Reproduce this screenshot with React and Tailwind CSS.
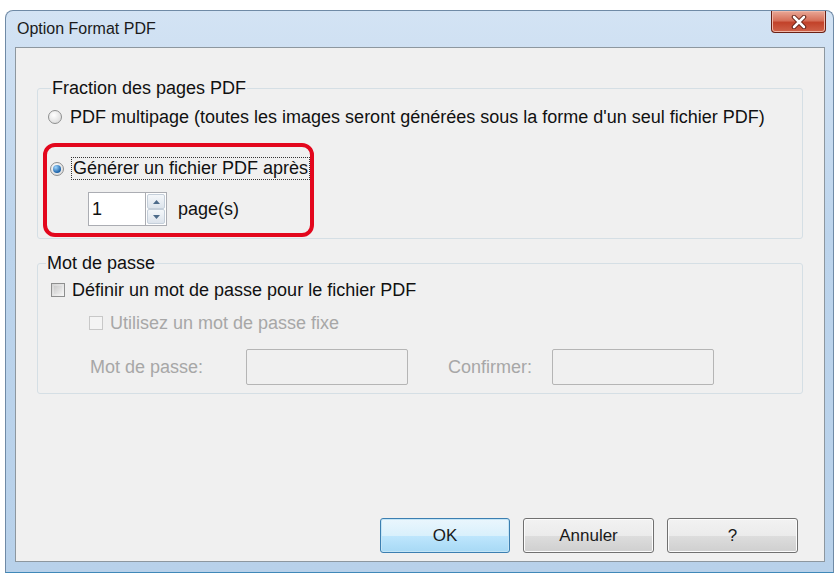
import React from 'react'

function Radio({ checked }) {
  return (
    <span className="relative flex h-[14px] w-[14px] shrink-0 items-center justify-center rounded-full border border-[#8e8f8f] bg-[radial-gradient(circle_at_40%_35%,#ffffff,#d4d4d4)]">
      {checked && (
        <span className="h-[8px] w-[8px] rounded-full bg-[radial-gradient(circle_at_35%_30%,#9fd7ff,#1c62a8_70%)]" />
      )}
    </span>
  )
}

function Checkbox({ disabled }) {
  return (
    <span
      className={
        disabled
          ? 'h-[14px] w-[14px] shrink-0 border border-[#c8c8c8] bg-[#f4f4f4]'
          : 'h-[14px] w-[14px] shrink-0 border border-[#8e8f8f] bg-[linear-gradient(135deg,#d4d4d4,#f6f6f6)] p-[2px]'
      }
    >
      {!disabled && <span className="block h-full w-full bg-[linear-gradient(135deg,#cbcbcb,#efefef)]" />}
    </span>
  )
}

function Spinner() {
  return (
    <div className="flex h-[34px]">
      <div className="flex w-[57px] items-center border border-[#abadb3] border-r-0 bg-white pl-[3px] text-[18px] leading-none">1</div>
      <div className="flex w-[22px] flex-col border border-[#abadb3] bg-white p-[1px]">
        <div className="flex flex-1 items-center justify-center rounded-[2px] border border-[#c5cfda] bg-[linear-gradient(to_bottom,#f4f7fa,#dde4ec)]">
          <svg width="7" height="4" viewBox="0 0 7 4"><path d="M0 4 L3.5 0 L7 4 Z" fill="#4d6b8a" /></svg>
        </div>
        <div className="flex flex-1 items-center justify-center rounded-[2px] border border-[#c5cfda] bg-[linear-gradient(to_bottom,#f4f7fa,#dde4ec)]">
          <svg width="7" height="4" viewBox="0 0 7 4"><path d="M0 0 L3.5 4 L7 0 Z" fill="#4d6b8a" /></svg>
        </div>
      </div>
    </div>
  )
}

function Button({ children, primary }) {
  return (
    <div
      className={
        primary
          ? 'flex h-[35px] w-[130px] items-center justify-center rounded-[3px] border border-[#3c7fb1] bg-[linear-gradient(to_bottom,#eaf6fd_0%,#d9f0fc_50%,#bee6fd_51%,#a7d9f5_100%)] shadow-[inset_0_0_0_1px_#c4e5f6] text-[17px] text-[#1a1a1a]'
          : 'flex h-[35px] w-[131px] items-center justify-center rounded-[3px] border border-[#707070] bg-[linear-gradient(to_bottom,#f2f2f2_0%,#ebebeb_50%,#dddddd_51%,#cfcfcf_100%)] shadow-[inset_0_0_0_1px_#fcfcfc] text-[17px] text-[#1a1a1a]'
      }
    >
      {children}
    </div>
  )
}

export default function App() {
  return (
    <div className="h-[576px] w-[840px] overflow-hidden bg-white pl-[5px] pt-[10px] font-['Liberation_Sans',Arial,sans-serif] text-[#111]">
      {/* window frame */}
      <div className="flex h-[563px] w-[829px] flex-col rounded-t-[8px] border border-[#6f8aa6] border-b-[#3f88b8] bg-[linear-gradient(to_bottom,#d3e3f4,#bcd4ec_40%,#b8d1ea)]">
        {/* title bar */}
        <div className="flex h-[36px] items-start justify-between pl-[11px] pr-[7px]">
          <span className="self-center pb-[1px] text-[16px] text-[#1b1b1b]">Option Format PDF</span>
          <div className="flex h-[22px] w-[55px] items-center justify-center rounded-b-[4px] border border-t-0 border-[#6a2015] bg-[linear-gradient(to_bottom,#e9a897_0%,#d6705a_45%,#c2422a_55%,#d0634a_100%)] shadow-[inset_0_0_0_1px_#f0b7a8]">
            <svg width="16" height="14" viewBox="0 0 16 14">
              <path d="M3 2 L13 12 M13 2 L3 12" stroke="#5b1a10" strokeWidth="4.5" strokeLinecap="round" />
              <path d="M3 2 L13 12 M13 2 L3 12" stroke="#ffffff" strokeWidth="2.6" strokeLinecap="round" />
            </svg>
          </div>
        </div>

        {/* client area */}
        <div className="ml-[9px] flex h-[515px] w-[810px] flex-col border border-[#8d979f] bg-[#f0f0f0] px-[21px] pt-[31px] text-[18px] leading-[20px]">
          {/* Fraction des pages PDF */}
          <fieldset className="rounded-[3px] border border-[#d5dfe5] pb-[1px] pl-[5px] pr-[5px] pt-[10px]">
            <legend className="ml-[8px] px-[1px] leading-[18px]">Fraction des pages PDF</legend>
            <div className="flex h-[20px] items-center">
              <span className="ml-[5px]"><Radio /></span>
              <span className="ml-[8px] whitespace-nowrap">PDF multipage (toutes les images seront générées sous la forme d'un seul fichier PDF)</span>
            </div>
            <div className="mt-[16px] w-[271px] rounded-[12px] border-4 border-[#e3071d] pb-[7px] pl-[3px] pt-[10px]">
              <div className="flex items-center">
                <Radio checked />
                <span className="ml-[7px] whitespace-nowrap border border-dotted border-[#333] px-[1px] leading-[21px]">Générer un fichier PDF après</span>
              </div>
              <div className="ml-[38px] mt-[12px] flex items-center">
                <Spinner />
                <span className="ml-[11px]">page(s)</span>
              </div>
            </div>
          </fieldset>

          {/* Mot de passe */}
          <fieldset className="mt-[15px] rounded-[3px] border border-[#d5dfe5] pb-[8px] pt-[8px]">
            <legend className="ml-[8px] px-[1px] leading-[18px]">Mot de passe</legend>
            <div className="flex h-[20px] items-center pl-[13px]">
              <Checkbox />
              <span className="ml-[7px] whitespace-nowrap">Définir un mot de passe pour le fichier PDF</span>
            </div>
            <div className="mt-[13px] flex h-[20px] items-center pl-[51px] text-[#a7a7a7]">
              <Checkbox disabled />
              <span className="ml-[7px] whitespace-nowrap">Utilisez un mot de passe fixe</span>
            </div>
            <div className="mt-[16px] flex items-center pl-[52px] text-[#a7a7a7]">
              <span className="w-[156px] whitespace-nowrap">Mot de passe:</span>
              <div className="h-[36px] w-[162px] rounded-[2px] border border-[#b5b5b5] bg-[#f0f0f0]" />
              <span className="ml-[40px] w-[104px] whitespace-nowrap">Confirmer:</span>
              <div className="h-[36px] w-[162px] rounded-[2px] border border-[#b5b5b5] bg-[#f0f0f0]" />
            </div>
          </fieldset>

          {/* buttons */}
          <div className="mt-auto flex justify-end gap-[13px] pb-[8px] pr-[5px]">
            <Button primary>OK</Button>
            <Button>Annuler</Button>
            <Button>?</Button>
          </div>
        </div>
      </div>
    </div>
  )
}
